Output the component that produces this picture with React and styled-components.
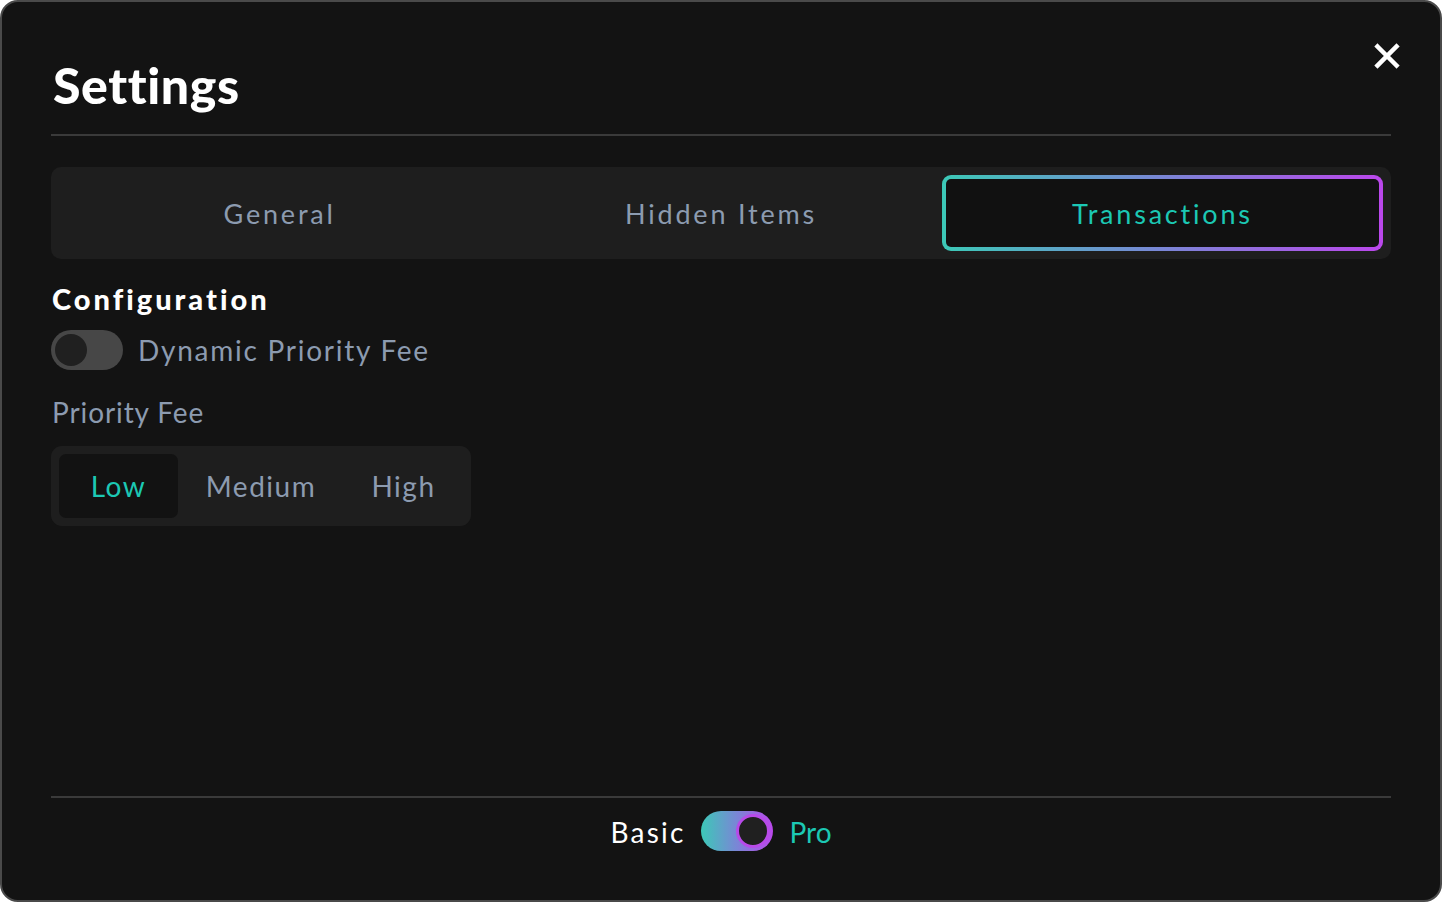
import React, { useState } from 'react';
import styled, { createGlobalStyle } from 'styled-components';

const Global = createGlobalStyle`
  html, body {
    margin: 0;
    padding: 0;
    background: #ffffff;
  }
  body {
    font-family: Lato, "Open Sans", sans-serif;
  }
  * {
    box-sizing: border-box;
  }
`;

const gradient = 'linear-gradient(90deg, #3cc9b7 0%, #7a86d6 50%, #bb47ec 100%)';

const Modal = styled.div`
  width: 1442px;
  height: 902px;
  background: #131313;
  border: 2px solid #4a4a4a;
  border-radius: 18px;
  padding: 0 49px 0 49px;
  display: flex;
  flex-direction: column;
  color: #fff;
`;

const Header = styled.header`
  display: flex;
  align-items: flex-start;
  justify-content: space-between;
  height: 134px;
  border-bottom: 2px solid #3a3a3a;
`;

const Title = styled.h1`
  margin: 54px 0 0 2px;
  font-size: 50px;
  font-weight: 900;
  letter-spacing: 0.6px;
  line-height: 58px;
  color: #fff;
`;

const Close = styled.button`
  margin: 39px -11px 0 0;
  width: 30px;
  height: 30px;
  padding: 0;
  border: none;
  background: none;
  cursor: pointer;
  display: flex;
  align-items: center;
  justify-content: center;
`;

const Tabs = styled.div`
  margin-top: 31px;
  height: 92px;
  background: #1e1e1e;
  border-radius: 10px;
  padding: 8px;
  display: grid;
  grid-template-columns: repeat(3, 1fr);
`;

const Tab = styled.button`
  border: 4px solid transparent;
  border-radius: 9px;
  background: ${({ $active }) =>
    $active
      ? `linear-gradient(#111, #111) padding-box, ${gradient} border-box`
      : 'transparent'};
  color: ${({ $active }) => ($active ? '#1cc8b4' : '#8c9bb0')};
  font-family: inherit;
  font-size: 27px;
  letter-spacing: 2.8px;
  cursor: pointer;
`;

const SectionTitle = styled.h2`
  margin: 22px 0 0 1px;
  font-size: 29px;
  font-weight: 900;
  letter-spacing: 3px;
  line-height: 36px;
  color: #fff;
`;

const ToggleRow = styled.label`
  display: flex;
  align-items: center;
  gap: 15px;
  margin-top: 13px;
`;

const Switch = styled.span`
  position: relative;
  display: inline-block;
  width: 72px;
  height: 40px;
  border-radius: 20px;
  background: ${({ $on }) => ($on ? gradient : '#474747')};
  flex-shrink: 0;
`;

const Knob = styled.span`
  position: absolute;
  top: ${({ $on }) => ($on ? '3px' : '4px')};
  left: ${({ $on }) => ($on ? '35px' : '4px')};
  width: ${({ $on }) => ($on ? '34px' : '32px')};
  height: ${({ $on }) => ($on ? '34px' : '32px')};
  border-radius: 50%;
  background: #202020;
  border: ${({ $on }) => ($on ? '3px solid #b84ae9' : 'none')};
`;

const Muted = styled.span`
  font-size: 28px;
  letter-spacing: 1.75px;
  color: #8c9bb0;
`;

const FieldLabel = styled.div`
  margin-top: 25px;
  margin-left: 1px;
  font-size: 28px;
  letter-spacing: 0.9px;
  color: #8c9bb0;
`;

const Segment = styled.div`
  margin-top: 17px;
  width: 420px;
  height: 80px;
  background: #1e1e1e;
  border-radius: 11px;
  padding: 8px;
  display: flex;
`;

const SegButton = styled.button`
  width: ${({ $w }) => $w}px;
  border: none;
  border-radius: 7px;
  background: ${({ $active }) => ($active ? '#121212' : 'transparent')};
  color: ${({ $active }) => ($active ? '#1cc8b4' : '#8c9bb0')};
  font-family: inherit;
  font-size: 28px;
  letter-spacing: 1.5px;
  padding: 0;
  cursor: pointer;
`;

const Spacer = styled.div`
  flex: 1;
`;

const Footer = styled.footer`
  height: 104px;
  border-top: 2px solid #3a3a3a;
  display: flex;
  justify-content: center;
  align-items: flex-start;
  padding-top: 13px;
  gap: 16px;
`;

const FooterText = styled.span`
  font-size: 28px;
  letter-spacing: ${({ $accent }) => ($accent ? '0' : '2.2px')};
  line-height: 42px;
  color: ${({ $accent }) => ($accent ? '#1cc8b4' : '#ffffff')};
`;

function XIcon() {
  return (
    <svg width="26" height="26" viewBox="0 0 26 26">
      <path d="M3.5 3.5 L22.5 22.5 M22.5 3.5 L3.5 22.5" stroke="#fff" strokeWidth="4.5" strokeLinecap="square" />
    </svg>
  );
}

export default function App() {
  const [tab, setTab] = useState('Transactions');
  const [fee, setFee] = useState('Low');
  const [dynamic, setDynamic] = useState(false);
  const [pro, setPro] = useState(true);

  return (
    <>
      <Global />
      <Modal>
        <Header>
          <Title>Settings</Title>
          <Close aria-label="Close">
            <XIcon />
          </Close>
        </Header>

        <Tabs>
          {['General', 'Hidden Items', 'Transactions'].map((t) => (
            <Tab key={t} $active={tab === t} onClick={() => setTab(t)}>
              {t}
            </Tab>
          ))}
        </Tabs>

        <SectionTitle>Configuration</SectionTitle>
        <ToggleRow onClick={() => setDynamic(!dynamic)}>
          <Switch $on={dynamic}>
            <Knob $on={dynamic} />
          </Switch>
          <Muted>Dynamic Priority Fee</Muted>
        </ToggleRow>

        <FieldLabel>Priority Fee</FieldLabel>
        <Segment>
          {[
            ['Low', 119],
            ['Medium', 166],
            ['High', 119],
          ].map(([f, w]) => (
            <SegButton key={f} $w={w} $active={fee === f} onClick={() => setFee(f)}>
              {f}
            </SegButton>
          ))}
        </Segment>

        <Spacer />

        <Footer>
          <FooterText>Basic</FooterText>
          <Switch $on={pro} onClick={() => setPro(!pro)}>
            <Knob $on={pro} />
          </Switch>
          <FooterText $accent>Pro</FooterText>
        </Footer>
      </Modal>
    </>
  );
}
